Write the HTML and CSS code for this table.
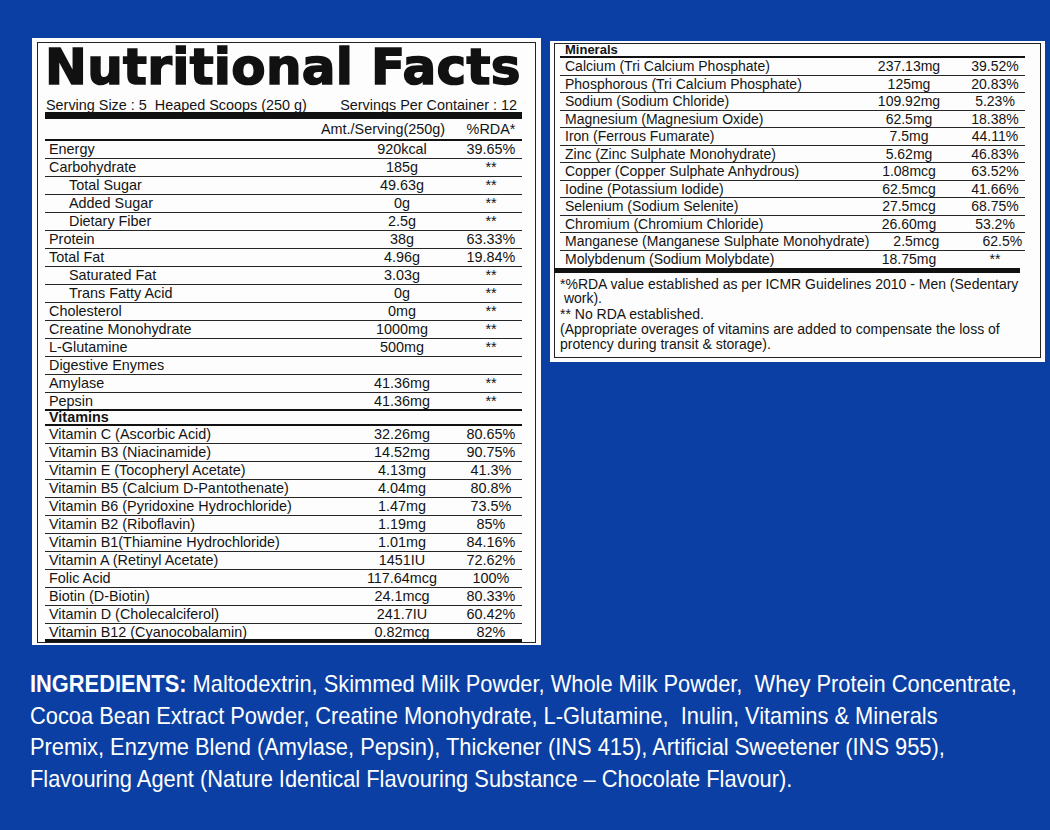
FILE: index.html
```html
<!DOCTYPE html>
<html lang="en">
<head>
<meta charset="utf-8">
<title>Nutritional Facts</title>
<link rel="stylesheet" href="styles.css">
</head>
<body>
<main class="page">
  <div class="panels">
    <section class="facts">
      <div class="facts-inner">
        <h1 class="title">Nutritional Facts</h1>
        <div class="serving">
          <span>Serving Size : 5&nbsp; Heaped Scoops (250 g)</span>
          <span>Servings Per Container : 12</span>
        </div>
        <div class="bar"></div>
        <div class="thead">
          <span class="th-amt">Amt./Serving(250g)</span>
          <span class="th-rda">%RDA*</span>
        </div>
        <div class="row"><span class="name">Energy</span><span class="amt">920kcal</span><span class="rda">39.65%</span></div>
        <div class="row"><span class="name">Carbohydrate</span><span class="amt">185g</span><span class="rda">**</span></div>
        <div class="row indent"><span class="name">Total Sugar</span><span class="amt">49.63g</span><span class="rda">**</span></div>
        <div class="row indent"><span class="name">Added Sugar</span><span class="amt">0g</span><span class="rda">**</span></div>
        <div class="row indent"><span class="name">Dietary Fiber</span><span class="amt">2.5g</span><span class="rda">**</span></div>
        <div class="row"><span class="name">Protein</span><span class="amt">38g</span><span class="rda">63.33%</span></div>
        <div class="row"><span class="name">Total Fat</span><span class="amt">4.96g</span><span class="rda">19.84%</span></div>
        <div class="row indent"><span class="name">Saturated Fat</span><span class="amt">3.03g</span><span class="rda">**</span></div>
        <div class="row indent"><span class="name">Trans Fatty Acid</span><span class="amt">0g</span><span class="rda">**</span></div>
        <div class="row"><span class="name">Cholesterol</span><span class="amt">0mg</span><span class="rda">**</span></div>
        <div class="row"><span class="name">Creatine Monohydrate</span><span class="amt">1000mg</span><span class="rda">**</span></div>
        <div class="row"><span class="name">L-Glutamine</span><span class="amt">500mg</span><span class="rda">**</span></div>
        <div class="row"><span class="name">Digestive Enymes</span><span class="amt"></span><span class="rda"></span></div>
        <div class="row"><span class="name">Amylase</span><span class="amt">41.36mg</span><span class="rda">**</span></div>
        <div class="row row-end"><span class="name">Pepsin</span><span class="amt">41.36mg</span><span class="rda">**</span></div>
        <div class="section">Vitamins</div>
        <div class="row"><span class="name">Vitamin C (Ascorbic Acid)</span><span class="amt">32.26mg</span><span class="rda">80.65%</span></div>
        <div class="row"><span class="name">Vitamin B3 (Niacinamide)</span><span class="amt">14.52mg</span><span class="rda">90.75%</span></div>
        <div class="row"><span class="name">Vitamin E (Tocopheryl Acetate)</span><span class="amt">4.13mg</span><span class="rda">41.3%</span></div>
        <div class="row"><span class="name">Vitamin B5 (Calcium D-Pantothenate)</span><span class="amt">4.04mg</span><span class="rda">80.8%</span></div>
        <div class="row"><span class="name">Vitamin B6 (Pyridoxine Hydrochloride)</span><span class="amt">1.47mg</span><span class="rda">73.5%</span></div>
        <div class="row"><span class="name">Vitamin B2 (Riboflavin)</span><span class="amt">1.19mg</span><span class="rda">85%</span></div>
        <div class="row"><span class="name">Vitamin B1(Thiamine Hydrochloride)</span><span class="amt">1.01mg</span><span class="rda">84.16%</span></div>
        <div class="row"><span class="name">Vitamin A (Retinyl Acetate)</span><span class="amt">1451IU</span><span class="rda">72.62%</span></div>
        <div class="row"><span class="name">Folic Acid</span><span class="amt">117.64mcg</span><span class="rda">100%</span></div>
        <div class="row"><span class="name">Biotin (D-Biotin)</span><span class="amt">24.1mcg</span><span class="rda">80.33%</span></div>
        <div class="row"><span class="name">Vitamin D (Cholecalciferol)</span><span class="amt">241.7IU</span><span class="rda">60.42%</span></div>
        <div class="row row-last"><span class="name">Vitamin B12 (Cyanocobalamin)</span><span class="amt">0.82mcg</span><span class="rda">82%</span></div>
      </div>
    </section>

    <section class="minerals">
      <div class="minerals-inner">
        <div class="m-head">Minerals</div>
        <div class="mrow"><span class="name">Calcium (Tri Calcium Phosphate)</span><span class="amt">237.13mg</span><span class="rda">39.52%</span></div>
        <div class="mrow"><span class="name">Phosphorous (Tri Calcium Phosphate)</span><span class="amt">125mg</span><span class="rda">20.83%</span></div>
        <div class="mrow"><span class="name">Sodium (Sodium Chloride)</span><span class="amt">109.92mg</span><span class="rda">5.23%</span></div>
        <div class="mrow"><span class="name">Magnesium (Magnesium Oxide)</span><span class="amt">62.5mg</span><span class="rda">18.38%</span></div>
        <div class="mrow"><span class="name">Iron (Ferrous Fumarate)</span><span class="amt">7.5mg</span><span class="rda">44.11%</span></div>
        <div class="mrow"><span class="name">Zinc (Zinc Sulphate Monohydrate)</span><span class="amt">5.62mg</span><span class="rda">46.83%</span></div>
        <div class="mrow"><span class="name">Copper (Copper Sulphate Anhydrous)</span><span class="amt">1.08mcg</span><span class="rda">63.52%</span></div>
        <div class="mrow"><span class="name">Iodine (Potassium Iodide)</span><span class="amt">62.5mcg</span><span class="rda">41.66%</span></div>
        <div class="mrow"><span class="name">Selenium (Sodium Selenite)</span><span class="amt">27.5mcg</span><span class="rda">68.75%</span></div>
        <div class="mrow"><span class="name">Chromium (Chromium Chloride)</span><span class="amt">26.60mg</span><span class="rda">53.2%</span></div>
        <div class="mrow"><span class="name">Manganese (Manganese Sulphate Monohydrate)</span><span class="amt">2.5mcg</span><span class="rda">62.5%</span></div>
        <div class="mrow mrow-last"><span class="name">Molybdenum (Sodium Molybdate)</span><span class="amt">18.75mg</span><span class="rda">**</span></div>
        <div class="mbar"></div>
        <div class="notes">
          <div class="note-a">*%RDA value established as per ICMR Guidelines 2010 - Men (Sedentary</div>
          <div class="note-a">&nbsp;work).</div>
          <div class="note-b first">** No RDA established.</div>
          <div class="note-b">(Appropriate overages of vitamins are added to compensate the loss of</div>
          <div class="note-b">protency during transit &amp; storage).</div>
        </div>
      </div>
    </section>
  </div>

  <div class="ingredients">
    <div class="ing-line"><strong class="ing-label">INGREDIENTS:</strong> Maltodextrin, Skimmed Milk Powder, Whole Milk Powder,&nbsp; Whey Protein Concentrate,</div>
    <div class="ing-line">Cocoa Bean Extract Powder, Creatine Monohydrate, L-Glutamine,&nbsp; Inulin, Vitamins &amp; Minerals</div>
    <div class="ing-line">Premix, Enzyme Blend (Amylase, Pepsin), Thickener (INS 415), Artificial Sweetener (INS 955),</div>
    <div class="ing-line">Flavouring Agent (Nature Identical Flavouring Substance – Chocolate Flavour).</div>
  </div>
</main>
</body>
</html>
```

FILE: styles.css
```css
html, body {
  margin: 0;
  padding: 0;
}

body {
  width: 1050px;
  height: 830px;
  overflow: hidden;
  background: #0b3fa3;
  font-family: "Liberation Sans", Arial, sans-serif;
  color: #141414;
}

.page {
  padding: 38px 0 0 30px;
}

.panels {
  display: flex;
  align-items: flex-start;
  gap: 9px;
  margin-left: 2px;
}

/* ---------- left panel ---------- */
.facts {
  background: #fdfdfd;
  width: 509px;
  height: 607px;
  padding: 4px 5px 2px 5px;
  box-sizing: border-box;
}

.facts-inner {
  border: 1px solid #222;
  height: 100%;
  box-sizing: border-box;
  padding: 1px 13px 0 7px;
}

.title {
  margin: 0;
  font-family: "DejaVu Sans", "Liberation Sans", sans-serif;
  font-weight: bold;
  font-size: 50px;
  line-height: 46px;
  letter-spacing: 0.3px;
  color: #111;
  -webkit-text-stroke: 1.6px #111;
  white-space: nowrap;
}

.serving {
  display: flex;
  justify-content: space-between;
  margin-top: 8px;
  padding: 0 5px 0 1px;
  font-size: 14.4px;
  line-height: 14px;
  white-space: nowrap;
}

.bar {
  height: 7px;
  background: #111;
}

.thead {
  display: flex;
  justify-content: flex-end;
  height: 22px;
  box-sizing: border-box;
  padding-top: 1px;
  border-bottom: 2px solid #111;
  font-size: 14.4px;
  line-height: 19px;
}

.th-amt {
  margin-right: 15px;
}

.th-rda {
  width: 62px;
  text-align: center;
}

.row {
  display: grid;
  grid-template-columns: 1fr 96px 72px;
  height: 18px;
  box-sizing: border-box;
  border-bottom: 1px solid #262626;
  font-size: 14.4px;
  line-height: 17px;
  white-space: nowrap;
}

.row .name {
  padding-left: 4px;
}

.row.indent .name {
  padding-left: 24px;
}

.amt {
  text-align: center;
}

.row .rda {
  text-align: center;
  padding-left: 10px;
}

.row-end {
  border-bottom: 2px solid #111;
}

.section {
  height: 15px;
  box-sizing: border-box;
  border-bottom: 2px solid #111;
  padding-left: 4px;
  font-size: 14.4px;
  font-weight: bold;
  line-height: 13px;
}

.row-last {
  border-bottom: 3px solid #111;
  line-height: 16px;
}

/* ---------- right panel ---------- */
.minerals {
  background: #fdfdfd;
  width: 495px;
  height: 321px;
  margin-top: 3px;
  padding: 2px 4px 4px 4px;
  box-sizing: border-box;
}

.minerals-inner {
  border: 1px solid #222;
  height: 100%;
  box-sizing: border-box;
  padding: 0 15px 0 5px;
}

.m-head {
  height: 14px;
  box-sizing: border-box;
  border-bottom: 2px solid #111;
  padding-left: 5px;
  font-size: 13px;
  font-weight: bold;
  line-height: 11px;
}

.mrow {
  display: grid;
  grid-template-columns: 1fr 94px 69px;
  height: 17.5px;
  box-sizing: border-box;
  border-bottom: 1px solid #262626;
  font-size: 14px;
  line-height: 16px;
  white-space: nowrap;
}

.mrow .name {
  padding-left: 5px;
}

.mrow .rda {
  text-align: center;
  padding-left: 9px;
}

.mrow-last {
  border-bottom: none;
}

.mbar {
  height: 5px;
  background: #111;
  margin: 0 5px 0 -6px;
}

.notes {
  margin-top: 4px;
  font-size: 14px;
  white-space: nowrap;
}

.note-a {
  line-height: 14px;
}

.note-b {
  line-height: 15px;
}

.note-b.first {
  margin-top: 2px;
}

/* ---------- ingredients ---------- */
.ingredients {
  margin-top: 23px;
  color: #fff;
  font-size: 24px;
  line-height: 31.5px;
}

.ing-line {
  white-space: nowrap;
  transform: scaleX(0.91);
  transform-origin: 0 0;
}

.ing-label {
  font-weight: bold;
}
```
